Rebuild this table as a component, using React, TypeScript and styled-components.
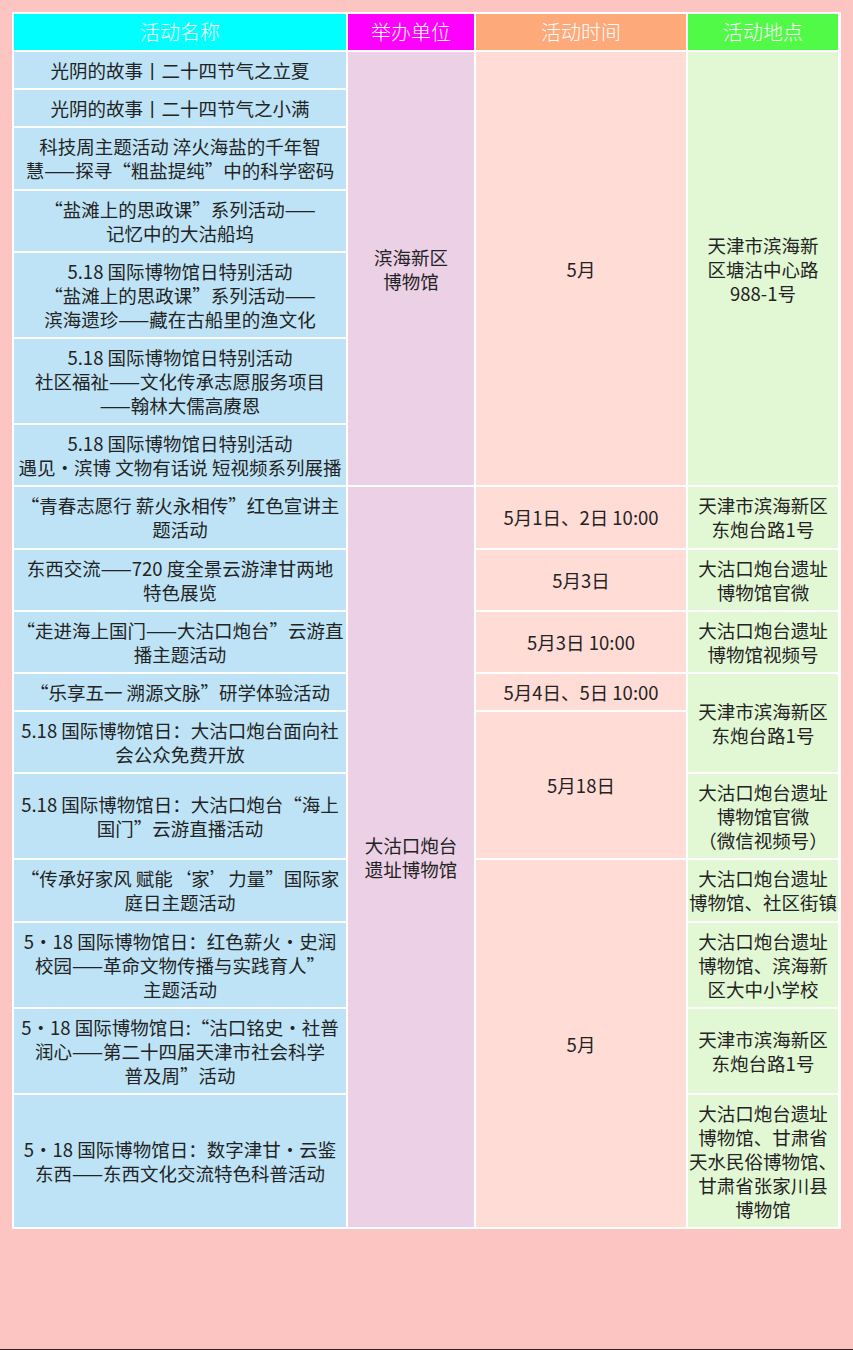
import styled, { createGlobalStyle } from 'styled-components';

const GlobalStyle = createGlobalStyle`
  html, body {
    margin: 0;
    padding: 0;
    background: #fdc5c2;
  }
`;

const Page = styled.div`
  display: flex;
  flex-direction: column;
  height: 1350px;
  background: #fdc5c2;
  font-family: "Noto Sans CJK SC", "Noto Sans", sans-serif;
`;

const Table = styled.div`
  display: grid;
  grid-template-columns: 332px 126px 210px 150px;
  gap: 2px;
  padding: 2px 3px 2px 2px;
  margin: 12px 0 0 12px;
  width: max-content;
  background: #ffffff;
`;

const Head = styled.div<{ $bg: string }>`
  height: 36px;
  line-height: 36px;
  text-align: center;
  font-size: 20px;
  font-weight: 300;
  color: #ffffff;
  background: ${(p) => p.$bg};
`;

const palette = ['#bee3f6', '#ecd0e6', '#ffdcd6', '#e2f7d4'];

const Cell = styled.div<{ $col: number; $row: number; $span: number }>`
  grid-column: ${(p) => p.$col};
  grid-row: ${(p) => p.$row + 1} / span ${(p) => p.$span};
  display: flex;
  flex-direction: column;
  align-items: center;
  justify-content: center;
  padding: 6px 0 6.2px;
  background: ${(p) => palette[p.$col - 1]};
  color: #232323;
  font-size: 18.5px;
  font-weight: 400;
  line-height: 24px;
  text-align: center;
  white-space: nowrap;
`;

const Spacer = styled.div`
  flex: 1;
`;

const BottomLine = styled.div`
  height: 1px;
  background: #2e1f1f;
`;

type Entry = [number, number, string[]];

// [row, span, lines] per column
const names: Entry[] = [
  [1, 1, ['光阴的故事丨二十四节气之立夏']],
  [2, 1, ['光阴的故事丨二十四节气之小满']],
  [3, 1, ['科技周主题活动 淬火海盐的千年智', '慧——探寻“粗盐提纯”中的科学密码']],
  [4, 1, ['“盐滩上的思政课”系列活动——', '记忆中的大沽船坞']],
  [5, 1, ['5.18 国际博物馆日特别活动', '“盐滩上的思政课”系列活动——', '滨海遗珍——藏在古船里的渔文化']],
  [6, 1, ['5.18 国际博物馆日特别活动', '社区福祉——文化传承志愿服务项目', '——翰林大儒高赓恩']],
  [7, 1, ['5.18 国际博物馆日特别活动', '遇见·滨博 文物有话说 短视频系列展播']],
  [8, 1, ['“青春志愿行 薪火永相传”红色宣讲主', '题活动']],
  [9, 1, ['东西交流——720 度全景云游津甘两地', '特色展览']],
  [10, 1, ['“走进海上国门——大沽口炮台”云游直', '播主题活动']],
  [11, 1, ['“乐享五一 溯源文脉”研学体验活动']],
  [12, 1, ['5.18 国际博物馆日：大沽口炮台面向社', '会公众免费开放']],
  [13, 1, ['5.18 国际博物馆日：大沽口炮台“海上', '国门”云游直播活动']],
  [14, 1, ['“传承好家风 赋能‘家’力量”国际家', '庭日主题活动']],
  [15, 1, ['5·18 国际博物馆日：红色薪火·史润', '校园——革命文物传播与实践育人”', '主题活动']],
  [16, 1, ['5·18 国际博物馆日:“沽口铭史·社普', '润心——第二十四届天津市社会科学', '普及周”活动']],
  [17, 1, ['5·18 国际博物馆日：数字津甘·云鉴', '东西——东西文化交流特色科普活动']],
];

const hosts: Entry[] = [
  [1, 7, ['滨海新区', '博物馆']],
  [8, 10, ['大沽口炮台', '遗址博物馆']],
];

const times: Entry[] = [
  [1, 7, ['5月']],
  [8, 1, ['5月1日、2日 10:00']],
  [9, 1, ['5月3日']],
  [10, 1, ['5月3日 10:00']],
  [11, 1, ['5月4日、5日 10:00']],
  [12, 2, ['5月18日']],
  [14, 4, ['5月']],
];

const places: Entry[] = [
  [1, 7, ['天津市滨海新', '区塘沽中心路', '988-1号']],
  [8, 1, ['天津市滨海新区', '东炮台路1号']],
  [9, 1, ['大沽口炮台遗址', '博物馆官微']],
  [10, 1, ['大沽口炮台遗址', '博物馆视频号']],
  [11, 2, ['天津市滨海新区', '东炮台路1号']],
  [13, 1, ['大沽口炮台遗址', '博物馆官微', '（微信视频号）']],
  [14, 1, ['大沽口炮台遗址', '博物馆、社区街镇']],
  [15, 1, ['大沽口炮台遗址', '博物馆、滨海新', '区大中小学校']],
  [16, 1, ['天津市滨海新区', '东炮台路1号']],
  [17, 1, ['大沽口炮台遗址', '博物馆、甘肃省', '天水民俗博物馆、', '甘肃省张家川县', '博物馆']],
];

const heads = [
  { label: '活动名称', bg: '#00ffff' },
  { label: '举办单位', bg: '#ff00ff' },
  { label: '活动时间', bg: '#fea97a' },
  { label: '活动地点', bg: '#50fa46' },
];

const App = () => {
  const columns = [names, hosts, times, places];
  return (
    <Page>
      <GlobalStyle />
      <Table>
        {heads.map((h) => (
          <Head key={h.label} $bg={h.bg}>
            {h.label}
          </Head>
        ))}
        {columns.map((entries, ci) =>
          entries.map(([row, span, lines]) => (
            <Cell key={`${ci}-${row}`} $col={ci + 1} $row={row} $span={span}>
              {lines.map((line, i) => (
                <span key={i}>{line}</span>
              ))}
            </Cell>
          ))
        )}
      </Table>
      <Spacer />
      <BottomLine />
    </Page>
  );
};

export default App;
